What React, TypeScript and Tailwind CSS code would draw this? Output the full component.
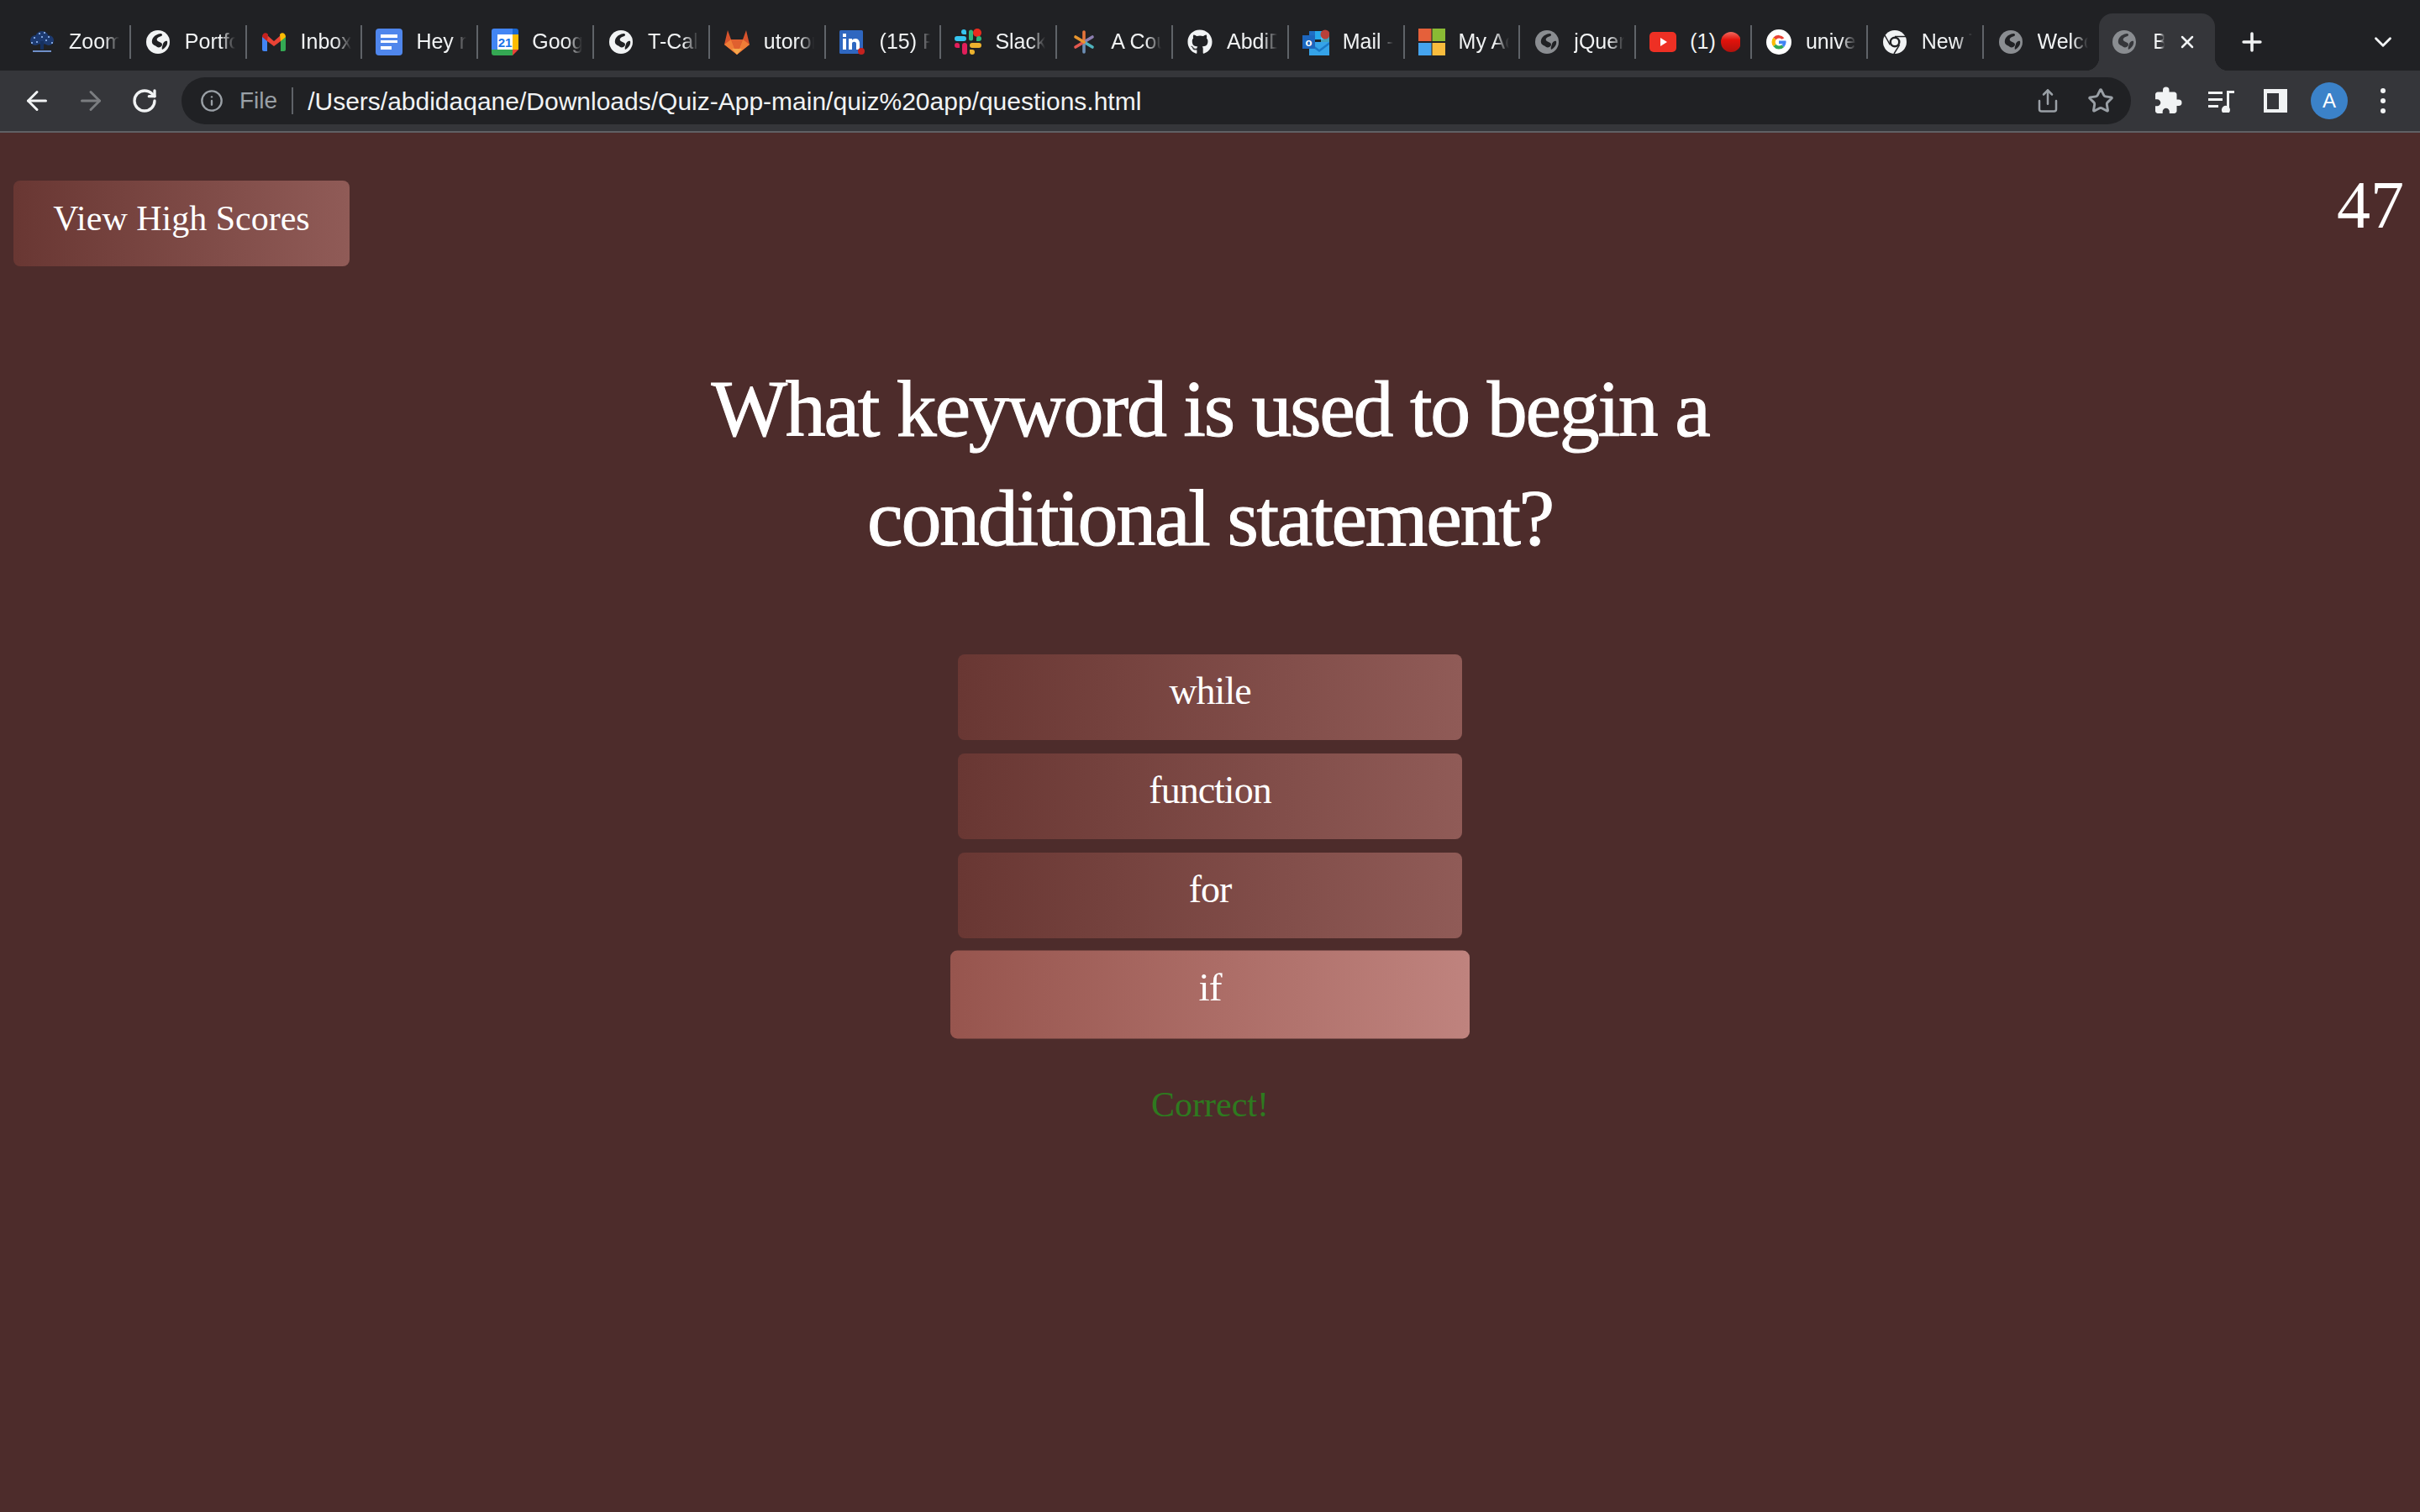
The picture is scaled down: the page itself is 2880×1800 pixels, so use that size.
import React from "react";
import { ArrowLeft, ArrowRight, RotateCw, Info, Share, Star, X, Plus, ChevronDown } from "lucide-react";
import { MdExtension } from "react-icons/md";
import { FaGithub } from "react-icons/fa";

const S = ({ children }: { children: React.ReactNode }) => (
  <svg viewBox="0 0 28 28" width="28" height="28" className="shrink-0">{children}</svg>
);

const Globe = ({ fill = "#f1f3f4", ink = "#202124" }: { fill?: string; ink?: string }) => (
  <S>
    <circle cx="14" cy="14" r="14" fill={fill} />
    <path d="M7 15C6 10 10 5 17 4c2 0 3 2 1 3-4 1-6 3-5 5 1 2 6 2 6 5 0 3-4 4-6 3-2-2-5-2-6-5z" fill={ink} />
    <path d="M25 13c1 4-2 8-6 10-1-3 1-5 1-7 1-2 3-4 5-3z" fill={ink} />
  </S>
);

const ZoomTree = () => (
  <svg viewBox="0 0 32 28" width="32" height="28" className="shrink-0">
    <circle cx="16" cy="9" r="8" fill="#1d3a70" />
    <circle cx="8" cy="12" r="6" fill="#1d3a70" />
    <circle cx="24" cy="12" r="6" fill="#1d3a70" />
    <g fill="#7fa3dc">
      <rect x="6" y="8" width="2" height="2" />
      <rect x="12" y="3" width="2" height="2" />
      <rect x="18" y="2" width="2" height="2" />
      <rect x="23" y="7" width="2" height="2" />
      <rect x="3" y="14" width="2" height="2" />
      <rect x="27" y="14" width="2" height="2" />
      <rect x="9" y="13" width="2" height="2" />
      <rect x="20" y="11" width="2" height="2" />
      <rect x="15" y="7" width="2" height="2" />
    </g>
    <path d="M14 13h4v10h-4z" fill="#16305f" />
    <path d="M5 24h22v2H5z" fill="#6f8fc9" />
  </svg>
);
const Gmail = () => (
  <svg viewBox="0 0 28 22" width="28" height="22" className="shrink-0">
    <path d="M0 5h6v17H2a2 2 0 0 1-2-2z" fill="#4285f4" />
    <path d="M22 5h6v15a2 2 0 0 1-2 2h-4z" fill="#34a853" />
    <path d="M6 3l8 7 8-7v7l-8 6-8-6z" fill="#ea4335" />
    <path d="M0 5C0 0 5-1 7 2l-1 8-6-5z" fill="#c5221f" />
    <path d="M28 5c0-5-5-6-7-3l1 8 6-5z" fill="#fbbc04" />
  </svg>
);
const Docs = () => (
  <svg viewBox="0 0 32 32" width="32" height="32" className="shrink-0">
    <rect width="32" height="32" rx="4" fill="#4f86ec" />
    <path d="M6 7h20v4H6zM6 14h20v3H6zM6 21h13v4H6z" fill="#fff" />
  </svg>
);
const Calendar = () => (
  <svg viewBox="0 0 32 32" width="32" height="32" className="shrink-0">
    <path d="M3 0h23v7H7v18H0V3a3 3 0 0 1 3-3z" fill="#4285f4" />
    <path d="M25 0h4a3 3 0 0 1 3 3v4h-7z" fill="#1967d2" />
    <path d="M25 7h7v18h-7z" fill="#fbbc04" />
    <path d="M0 25h25v7H3a3 3 0 0 1-3-3z" fill="#34a853" />
    <path d="M25 25h7l-7 7z" fill="#ea4335" />
    <path d="M7 7h18v18H7z" fill="#fff" />
    <text x="16" y="22" textAnchor="middle" fontSize="15" fontWeight="700" fill="#1a73e8" fontFamily="Liberation Sans">21</text>
  </svg>
);
const GitLab = () => (
  <svg viewBox="0 0 32 32" width="32" height="32" className="shrink-0">
    <path d="M16 31 1 19 5 2l4 11h14l4-11 4 17z" fill="#d9532c" />
    <path d="M16 31 1 19l8-6z" fill="#ef7d37" />
    <path d="M16 31l15-12-8-6z" fill="#ef7d37" />
    <path d="M16 31l-7-18h14z" fill="#e0602f" />
    <path d="M16 31l-6-7h12z" fill="#f5a64a" />
  </svg>
);
const LinkedIn = () => (
  <svg viewBox="0 0 32 32" width="32" height="32" className="shrink-0">
    <rect x="0" y="2" width="28" height="28" rx="1.500" fill="#2f67c0" />
    <path d="M4 12h4v13H4zM4 6h4v4H4zM11 12h4v2c1-2 8-4 9 3v8h-4v-7c0-3-5-3-5 0v7h-4z" fill="#fff" />
    <circle cx="26" cy="27" r="4" fill="#c5221f" />
  </svg>
);
const Slack = () => (
  <svg viewBox="0 0 32 32" width="32" height="32" className="shrink-0">
    <path d="M11 1a3 3 0 0 1 3 3v3h-3a3 3 0 0 1 0-6zM3 9h8a3 3 0 0 1 0 6H3a3 3 0 0 1 0-6z" fill="#36c5f0" />
    <path d="M17 4a2.500 2.500 0 0 1 5 0v8a2.500 2.500 0 0 1-5 0z" fill="#2eb67d" />
    <circle cx="27" cy="5" r="5" fill="#ea2c1e" />
    <path d="M29 9a3 3 0 0 1 0 6h-3v-3a3 3 0 0 1 3-3z" fill="#2eb67d" />
    <path d="M21 17h8a3 3 0 0 1 0 6h-8a3 3 0 0 1 0-6zM18 25h3a3 3 0 1 1-3 3z" fill="#ecb22e" />
    <path d="M3 17a3 3 0 0 1 3 3v3H3a3 3 0 0 1 0-6zM9 20a3 3 0 0 1 6 0v8a3 3 0 0 1-6 0z" fill="#e01e5a" />
  </svg>
);
const Asterisk = () => (
  <S>
    <g strokeWidth="3.600" strokeLinecap="round">
      <path d="M14 14V2" stroke="#e8753a" />
      <path d="M14 14l10-6" stroke="#8d7fb0" />
      <path d="M14 14l10 6" stroke="#4fb3bd" />
      <path d="M14 14v12" stroke="#6d8fb5" />
      <path d="M14 14L4 20" stroke="#e2584f" />
      <path d="M14 14L4 8" stroke="#e8952f" />
    </g>
  </S>
);
const Outlook = () => (
  <svg viewBox="0 0 32 32" width="32" height="32" className="shrink-0">
    <path d="M8 3h14v10H8z" fill="#1f6fc5" />
    <path d="M15 3h10v10H15z" fill="#28a8ea" />
    <path d="M22 8h10v8H22z" fill="#50d9ff" opacity=".7" />
    <path d="M8 16h24v16H8z" fill="#35a3e8" />
    <path d="M8 16l12 9 12-9v3l-12 9-12-9z" fill="#1a78c6" />
    <rect x="0" y="8" width="15" height="16" fill="#1d66bd" />
    <text x="7.500" y="21" textAnchor="middle" fontSize="13" fontWeight="700" fill="#fff" fontFamily="Liberation Sans">o</text>
    <circle cx="27" cy="7" r="5.500" fill="#b8403a" />
  </svg>
);
const Microsoft = () => (
  <svg viewBox="0 0 32 32" width="32" height="32" className="shrink-0">
    <path d="M0 0h15.500v15H0z" fill="#e5603a" />
    <path d="M16.500 0H32v15H16.500z" fill="#8abb34" />
    <path d="M0 17h15.500v15H0z" fill="#45a4ee" />
    <path d="M16.500 17H32v15H16.500z" fill="#f8bc3d" />
  </svg>
);
const YouTube = () => (
  <svg viewBox="0 0 32 24" width="32" height="24" className="shrink-0">
    <rect width="32" height="24" rx="5" fill="#ee3024" />
    <path d="M13 7l8 5-8 5z" fill="#fff" />
  </svg>
);
const RedDot = () => (
  <svg viewBox="0 0 24 24" width="24" height="24" className="shrink-0">
    <defs>
      <linearGradient id="rd" x1="0" y1="0" x2="0" y2="1">
        <stop offset="0" stopColor="#f26a5e" />
        <stop offset=".4" stopColor="#e3120b" />
        <stop offset="1" stopColor="#b0120d" />
      </linearGradient>
    </defs>
    <circle cx="12" cy="12" r="12" fill="url(#rd)" />
  </svg>
);
const Google = () => (
  <svg viewBox="0 0 28 28" width="30" height="30" className="shrink-0">
    <circle cx="14" cy="14" r="14" fill="#fff" />
    <path d="M20 9.500A8 8 0 0 0 7.800 9l3 2.500a4.500 4.500 0 0 1 6.500-.5z" fill="#ea4335" />
    <path d="M7.800 9a8 8 0 0 0 0 10l3-2.500a4.500 4.500 0 0 1 0-5z" fill="#fbbc05" />
    <path d="M7.800 19a8 8 0 0 0 12 .5l-2.800-2.300a4.500 4.500 0 0 1-6.200-.7z" fill="#34a853" />
    <path d="M22 14.500c0-.7 0-1.200-.2-1.800H14v3.300h4.500a4 4 0 0 1-1.500 1.200l2.800 2.300a8 8 0 0 0 2.200-5z" fill="#4285f4" />
  </svg>
);
const Chrome = () => (
  <S>
    <circle cx="14" cy="14" r="14" fill="#f1f3f4" />
    <circle cx="14" cy="14" r="6.500" fill="#202124" />
    <circle cx="14" cy="14" r="4" fill="#f1f3f4" />
    <path d="M14 7.500h13" stroke="#202124" strokeWidth="1.500" />
    <path d="M8.400 17.300 2 6" stroke="#202124" strokeWidth="1.500" />
    <path d="M19.600 17.300 13 28" stroke="#202124" strokeWidth="1.500" />
  </S>
);

const tabs: { icon: React.ReactNode; text: string; extra?: React.ReactNode }[] = [
  { icon: <ZoomTree />, text: "Zoom Meeting" },
  { icon: <Globe />, text: "Portfolio" },
  { icon: <Gmail />, text: "Inbox (1)" },
  { icon: <Docs />, text: "Hey man" },
  { icon: <Calendar />, text: "Google Cal" },
  { icon: <Globe />, text: "T-Cal" },
  { icon: <GitLab />, text: "utoronto" },
  { icon: <LinkedIn />, text: "(15) Feed" },
  { icon: <Slack />, text: "Slack" },
  { icon: <Asterisk />, text: "A Course" },
  { icon: <FaGithub size={30} color="#f1f3f4" className="shrink-0" />, text: "AbdiDaq" },
  { icon: <Outlook />, text: "Mail - Abdi" },
  { icon: <Microsoft />, text: "My Account" },
  { icon: <Globe fill="#8a8d91" />, text: "jQuery" },
  { icon: <YouTube />, text: "(1)", extra: <RedDot /> },
  { icon: <Google />, text: "university" },
  { icon: <Chrome />, text: "New Tab" },
  { icon: <Globe fill="#8a8d91" />, text: "Welcome" },
];

function Tab({ t, sep }: { t: (typeof tabs)[number]; sep: boolean }) {
  return (
    <div className="flex items-center w-[137.8px] h-[68px] shrink-0 pl-4">
      <div className="w-[32px] h-[32px] flex items-center justify-center shrink-0">{t.icon}</div>
      <div className="ml-4 w-[60px] flex items-center gap-[6px] overflow-hidden whitespace-nowrap text-[25px] text-[#f1f3f4] [mask-image:linear-gradient(to_right,black_70%,transparent_100%)] [&:has(svg)]:[mask-image:none]">
        <span>{t.text}</span>
        {t.extra}
      </div>
      <div className="ml-auto h-[40px] w-[2px] shrink-0 bg-[#5f6368]" style={{ visibility: sep ? "visible" : "hidden" }} />
    </div>
  );
}

const papyrus = "font-['Liberation_Serif',serif]";

function Answer({ label, active }: { label: string; active?: boolean }) {
  return (
    <button
      className={
        active
          ? "w-[600px] h-[102px] pb-[16px] rounded-lg text-white text-[46px] tracking-[-1px] leading-none scale-[1.03] bg-gradient-to-r from-[#97554e] to-[#bf837e] " + papyrus
          : "w-[600px] h-[102px] pb-[14px] rounded-lg text-white text-[46px] tracking-[-1px] leading-none bg-gradient-to-r from-[#693733] to-[#905b57] " + papyrus
      }
    >
      {label}
    </button>
  );
}

export default function App() {
  return (
    <div className="w-[2880px] h-[1800px] flex flex-col bg-[#4d2c2b] font-['Liberation_Sans',sans-serif] overflow-hidden">
      {/* tab strip */}
      <header className="h-[84px] shrink-0 bg-[#202124] pt-4 pl-[18px] flex">
        {tabs.map((t, i) => (
          <Tab key={i} t={t} sep={i < tabs.length - 1} />
        ))}
        <div className="relative w-[138px] h-[68px] shrink-0 bg-[#35363a] rounded-t-2xl flex items-center pl-4">
          <div className="absolute -left-[16px] bottom-0 w-4 h-4 bg-[radial-gradient(circle_at_0_0,#202124_16px,#35363a_16.500px)]" />
          <div className="absolute -right-[16px] bottom-0 w-4 h-4 bg-[radial-gradient(circle_at_100%_0,#202124_16px,#35363a_16.500px)]" />
          <Globe fill="#8a8d91" ink="#35363a" />
          <span className="ml-[20px] w-[14px] overflow-hidden text-[25px] text-[#f1f3f4] whitespace-nowrap [mask-image:linear-gradient(to_right,black_60%,transparent)]">Bootcamp</span>
          <X size={24} color="#f1f3f4" strokeWidth={2.500} className="ml-[15px]" />
        </div>
        <div className="w-[88px] h-[68px] flex items-center justify-center">
          <Plus size={34} color="#f1f3f4" strokeWidth={2.500} />
        </div>
        <div className="ml-auto w-[64px] mr-[12px] h-[68px] flex items-center justify-center">
          <ChevronDown size={34} color="#f1f3f4" strokeWidth={2} />
        </div>
      </header>

      {/* toolbar */}
      <div className="h-[72px] shrink-0 bg-[#35363a] flex items-center pl-3 pr-3">
        <div className="w-16 flex justify-center"><ArrowLeft size={36} color="#f1f3f4" strokeWidth={2} /></div>
        <div className="w-16 flex justify-center"><ArrowRight size={36} color="#7b7d80" strokeWidth={2} /></div>
        <div className="w-16 flex justify-center"><RotateCw size={32} color="#f1f3f4" strokeWidth={2.500} /></div>
        <div className="ml-3 w-[2320px] h-14 rounded-full bg-[#202124] flex items-center pl-[22px] pr-[20px]">
          <Info size={28} color="#9aa0a6" strokeWidth={2} />
          <span className="ml-[19px] text-[28px] text-[#9aa0a6]">File</span>
          <div className="ml-[17px] w-[2px] h-8 bg-[#5f6368]" />
          <span className="ml-[17px] text-[30px] text-[#f1f3f4] whitespace-nowrap">/Users/abdidaqane/Downloads/Quiz-App-main/quiz%20app/questions.html</span>
          <Share size={30} color="#9aa0a6" strokeWidth={2} className="ml-auto" />
          <Star size={32} color="#9aa0a6" strokeWidth={2.200} className="ml-[32px]" />
        </div>
        <div className="ml-3 w-16 flex justify-center"><MdExtension size={36} color="#f1f3f4" /></div>
        <div className="w-16 flex justify-center">
          <svg viewBox="0 0 32 28" width="32" height="28">
            <path d="M0 3h17v3H0zM0 11h17v3H0zM0 19h12v3H0z" fill="#f1f3f4" />
            <path d="M22 20V2h9v3h-6v17a5 5 0 1 1-3-2z" fill="#f1f3f4" />
          </svg>
        </div>
        <div className="w-16 flex justify-center">
          <svg viewBox="0 0 28 28" width="28" height="28">
            <path fillRule="evenodd" d="M0 0h28v28H0zM4 5v19h14V5z" fill="#f1f3f4" />
          </svg>
        </div>
        <div className="w-16 flex justify-center">
          <div className="w-11 h-11 rounded-full bg-[#3b82c9] flex items-center justify-center text-white text-[24px]">A</div>
        </div>
        <div className="w-16 flex justify-center">
          <svg viewBox="0 0 8 32" width="8" height="32">
            <circle cx="4" cy="4" r="3" fill="#f1f3f4" />
            <circle cx="4" cy="16" r="3" fill="#f1f3f4" />
            <circle cx="4" cy="28" r="3" fill="#f1f3f4" />
          </svg>
        </div>
      </div>
      <div className="h-[2px] shrink-0 bg-[#5f6064]" />

      {/* page */}
      <main className={"flex-1 flex flex-col items-center text-white " + papyrus}>
        <div className="w-full flex justify-between items-start pl-4 pr-[19px] pt-[57px]">
          <button className="w-[400px] h-[102px] pb-[12px] rounded-lg text-white text-[42px] leading-none bg-gradient-to-r from-[#693733] to-[#905b57]">
            View High Scores
          </button>
          <div className="text-[80px] leading-none -mt-[11px]">47</div>
        </div>
        <h1 className="mt-[105px] w-[1300px] text-center text-[96px] leading-[130px] tracking-[-2.300px] font-normal [-webkit-text-stroke:1px_white]">
          What keyword is used to begin a conditional statement?
        </h1>
        <div className="mt-[97px] flex flex-col gap-4">
          <Answer label="while" />
          <Answer label="function" />
          <Answer label="for" />
          <Answer label="if" active />
        </div>
        <div className="mt-[59px] text-[42px] leading-none text-[#2e7a1f]">Correct!</div>
      </main>
    </div>
  );
}
